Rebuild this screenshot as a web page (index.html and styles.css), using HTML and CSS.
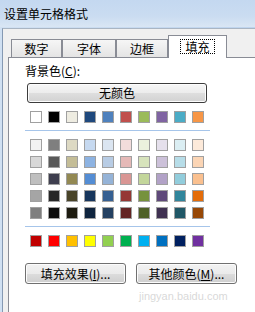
FILE: index.html
```html
<!DOCTYPE html>
<html>
<head>
<meta charset="utf-8">
<link rel="stylesheet" href="styles.css">
</head>
<body>
<div class="window">
  <div class="titlebar">设置单元格格式</div>
  <div class="dialog">
    <div class="tabs">
      <div class="tab t1">数字</div>
      <div class="tab t2">字体</div>
      <div class="tab t3">边框</div>
      <div class="tab sel"><span class="focus">填充</span></div>
    </div>
    <div class="panel">
      <div class="label">背景色(<u>C</u>):</div>
      <div class="nocolor">无颜色</div>
      <div class="row r1">
        <i style="background:#ffffff"></i><i style="background:#000000"></i><i style="background:#eeece1"></i><i style="background:#1f497d"></i><i style="background:#4f81bd"></i><i style="background:#c0504d"></i><i style="background:#9bbb59"></i><i style="background:#8064a2"></i><i style="background:#4bacc6"></i><i style="background:#f79646"></i>
      </div>
      <div class="sep"></div>
      <div class="grid">
        <div class="row">
          <i style="background:#f2f2f2"></i><i style="background:#7f7f7f"></i><i style="background:#ddd9c3"></i><i style="background:#c6d9f0"></i><i style="background:#dbe5f1"></i><i style="background:#f2dcdb"></i><i style="background:#ebf1dd"></i><i style="background:#e5e0ec"></i><i style="background:#dbeef3"></i><i style="background:#fdeada"></i>
        </div>
        <div class="row">
          <i style="background:#d8d8d8"></i><i style="background:#595959"></i><i style="background:#c4bd97"></i><i style="background:#8db3e2"></i><i style="background:#b8cce4"></i><i style="background:#e5b9b7"></i><i style="background:#d7e3bc"></i><i style="background:#ccc1d9"></i><i style="background:#b7dde8"></i><i style="background:#fbd5b5"></i>
        </div>
        <div class="row">
          <i style="background:#bfbfbf"></i><i style="background:#3f3f4f"></i><i style="background:#938953"></i><i style="background:#548dd4"></i><i style="background:#95b3d7"></i><i style="background:#d99694"></i><i style="background:#c3d69b"></i><i style="background:#b2a2c7"></i><i style="background:#92cddc"></i><i style="background:#fac08f"></i>
        </div>
        <div class="row">
          <i style="background:#a5a5a5"></i><i style="background:#262626"></i><i style="background:#494429"></i><i style="background:#17365d"></i><i style="background:#366092"></i><i style="background:#953734"></i><i style="background:#76923c"></i><i style="background:#5f497a"></i><i style="background:#31859b"></i><i style="background:#e36c09"></i>
        </div>
        <div class="row">
          <i style="background:#7f7f7f"></i><i style="background:#0c0c0c"></i><i style="background:#1d1b10"></i><i style="background:#0f243e"></i><i style="background:#244061"></i><i style="background:#632423"></i><i style="background:#4f6128"></i><i style="background:#3f3151"></i><i style="background:#205867"></i><i style="background:#974806"></i>
        </div>
      </div>
      <div class="sep"></div>
      <div class="row std">
        <i style="background:#c00000"></i><i style="background:#ff0000"></i><i style="background:#ffc000"></i><i style="background:#ffff00"></i><i style="background:#92d050"></i><i style="background:#00b050"></i><i style="background:#00b0f0"></i><i style="background:#0070c0"></i><i style="background:#002060"></i><i style="background:#7030a0"></i>
      </div>
      <div class="buttons">
        <div class="btn">填充效果(<u>I</u>)...</div>
        <div class="btn">其他颜色(<u>M</u>)...</div>
      </div>
      <div class="watermark">jingyan.baidu.com</div>
    </div>
  </div>
</div>
</body>
</html>
```

FILE: styles.css
```css
* { box-sizing: border-box; }
html, body { margin: 0; padding: 0; }
body {
  width: 255px;
  height: 312px;
  overflow: hidden;
  font-family: "Noto Sans CJK SC", "Noto Sans", sans-serif;
  font-size: 12px;
  color: #000;
}
.window {
  width: 255px;
  height: 312px;
  background: linear-gradient(to right, #d0e0f2, #bed4ee);
  display: flex;
  flex-direction: column;
}
.titlebar {
  height: 27px;
  line-height: 27px;
  padding-left: 4px;
  font-size: 12px;
  background: linear-gradient(to bottom, #c4d8f0 0%, #cadcf1 60%, #d9e6f4 100%);
}
.dialog {
  flex: 1;
  margin-left: 2px;
  margin-top: 1px;
  border-left: 1px solid #8599b3;
  border-top: 1px solid #a9b5c3;
  background: #f0f0f0;
  display: flex;
  flex-direction: column;
  padding-left: 5px;
}
.tabs {
  height: 28px;
  display: flex;
  align-items: flex-end;
  padding-left: 3px;
  position: relative;
  z-index: 1;
}
.tab {
  height: 18px;
  border: 1px solid #898c95;
  border-bottom: none;
  background: linear-gradient(to bottom, #f6f6f6, #e4e4e4);
  text-align: center;
  line-height: 17px;
}
.t1 { width: 51px; }
.t2 { width: 54px; }
.t3 { width: 52px; }
.sel {
  width: 59px;
  height: 23px;
  background: #fff;
  margin-bottom: -1px;
  line-height: 20px;
  padding-top: 1px;
}
.focus {
  display: inline-block;
  border: 1px dotted #000;
  padding: 0 4px;
  line-height: 13px;
  height: 15px;
}
.panel {
  flex: 1;
  background: #fff;
  border-left: 1px solid #898c95;
  border-top: 1px solid #898c95;
  padding-left: 16px;
  display: flex;
  flex-direction: column;
  position: relative;
}
.label {
  margin-top: 5px;
  height: 16px;
  line-height: 16px;
}
.nocolor {
  margin-top: 4px;
  margin-left: 2px;
  width: 180px;
  height: 20px;
  border: 1px solid #3c3c3c;
  border-radius: 3px;
  box-shadow: inset 0 0 0 1px #fdfdfd;
  background: linear-gradient(to bottom, #f6f6f6 0%, #ececec 50%, #dedede 51%, #d2d2d2 100%);
  text-align: center;
  line-height: 18px;
}
.row {
  display: flex;
  gap: 6px;
  margin-left: 5px;
  height: 12px;
}
.row i {
  display: block;
  width: 12px;
  height: 12px;
  border: 1px solid #a0a0a0;
}
.r1 { margin-top: 8px; }
.sep {
  margin-top: 7px;
  width: 185px;
  height: 1px;
  background: #a6c5ea;
}
.grid {
  margin-top: 8px;
  display: flex;
  flex-direction: column;
  gap: 5px;
}
.std { margin-top: 8px; }
.buttons {
  margin-top: 16px;
  display: flex;
  gap: 10px;
}
.btn {
  width: 101px;
  height: 21px;
  border: 1px solid #707070;
  border-radius: 3px;
  box-shadow: inset 0 0 0 1px #fcfcfc;
  background: linear-gradient(to bottom, #f2f2f2 0%, #ebebeb 50%, #dddddd 51%, #cfcfcf 100%);
  text-align: center;
  line-height: 19px;
}
.watermark {
  position: absolute;
  left: 130px;
  top: 232px;
  font-size: 11px;
  color: rgba(190, 190, 190, 0.6);
  font-family: "Liberation Sans", sans-serif;
  pointer-events: none;
}
```
